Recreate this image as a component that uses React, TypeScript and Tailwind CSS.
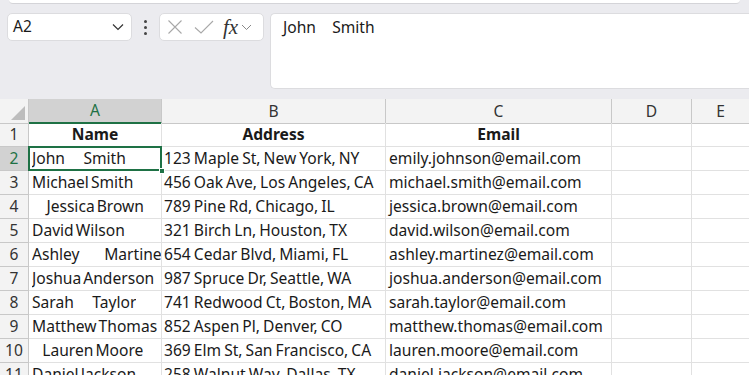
import React from "react";

const font = { fontFamily: '"Noto Sans", "Open Sans", sans-serif' };

const rows: [string, string, string][] = [
  ["John         Smith", "123 Maple St, New York, NY", "emily.johnson@email.com"],
  ["Michael Smith", "456 Oak Ave, Los Angeles, CA", "michael.smith@email.com"],
  ["       Jessica Brown", "789 Pine Rd, Chicago, IL", "jessica.brown@email.com"],
  ["David Wilson", "321 Birch Ln, Houston, TX", "david.wilson@email.com"],
  ["Ashley            Martinez", "654 Cedar Blvd, Miami, FL", "ashley.martinez@email.com"],
  ["Joshua Anderson", "987 Spruce Dr, Seattle, WA", "joshua.anderson@email.com"],
  ["Sarah         Taylor", "741 Redwood Ct, Boston, MA", "sarah.taylor@email.com"],
  ["Matthew Thomas", "852 Aspen Pl, Denver, CO", "matthew.thomas@email.com"],
  ["     Lauren Moore", "369 Elm St, San Francisco, CA", "lauren.moore@email.com"],
  ["Daniel Jackson", "258 Walnut Way, Dallas, TX", "daniel.jackson@email.com"],
];

const cols = "grid-cols-[29px_133px_224px_226px_80px_1fr]";

export default function App() {
  return (
    <div className="w-[749px] h-[375px] overflow-hidden bg-[#ebebef] text-[#1a1a1a]" style={font}>
      <div className="mx-[9px] h-[4px] bg-white border-b border-[#d4d4d8] rounded-b-[4px]" />
      <div className="flex items-start h-[93px] pt-[9px]">
        <div className="ml-[7px] w-[125px] h-[28px] bg-white border border-[#dcdcdf] rounded-[5px] flex items-center pl-[5px] pr-[7px]">
          <span className="text-[15.5px] flex-1">A2</span>
          <svg width="12" height="8" viewBox="0 0 12 8"><path d="M1 1.5 L6 6.5 L11 1.5" fill="none" stroke="#333" strokeWidth="1.2" /></svg>
        </div>
        <div className="w-[27px] h-[28px] flex flex-col items-center justify-center gap-[3px]">
          <div className="w-[3px] h-[3px] bg-[#444] rounded-full" />
          <div className="w-[3px] h-[3px] bg-[#444] rounded-full" />
          <div className="w-[3px] h-[3px] bg-[#444] rounded-full" />
        </div>
        <div className="w-[105px] h-[28px] bg-white border border-[#dcdcdf] rounded-[5px] flex items-center pl-[7px]">
          <svg width="16" height="16" viewBox="0 0 16 16"><path d="M1.5 1.5 L14.5 14.5 M14.5 1.5 L1.5 14.5" stroke="#a8a8a8" strokeWidth="1.1" fill="none" /></svg>
          <svg className="ml-[11px]" width="20" height="16" viewBox="0 0 20 16"><path d="M1 8.5 L7 14 L19 2" stroke="#a8a8a8" strokeWidth="1.1" fill="none" /></svg>
          <span className="ml-[9px] text-[21px] leading-none italic text-[#333]" style={{ fontFamily: '"Liberation Serif", serif' }}>fx</span>
          <svg className="ml-[3px]" width="11" height="7" viewBox="0 0 11 7"><path d="M1 1 L5.5 5.5 L10 1" fill="none" stroke="#888" strokeWidth="1" /></svg>
        </div>
        <div className="ml-[6px] flex-1 h-[76px] bg-white border border-[#dcdcdf] rounded-l-[5px] border-r-0 pl-[12px] pt-[1px]">
          <span className="text-[15.6px] whitespace-pre">John    Smith</span>
        </div>
      </div>
      <div className="mt-[2px] text-[15.6px] [word-spacing:-1px]">
        <div className={`grid ${cols} h-[24px] bg-[#f3f3f3] text-[#333]`}>
          <div className="relative border-r border-b border-[#c8c8c8]">
            <svg className="absolute right-[3px] bottom-[3px]" width="14" height="14" viewBox="0 0 14 14"><path d="M14 0 L14 14 L0 14 Z" fill="#bdbdbd" /></svg>
          </div>
          <div className="bg-[#d2d2d2] border-r border-[#c8c8c8] border-b-2 border-b-[#1e7145] flex items-center justify-center text-[#1e7145]">A</div>
          <div className="border-r border-b border-[#c8c8c8] flex items-center justify-center">B</div>
          <div className="border-r border-b border-[#c8c8c8] flex items-center justify-center">C</div>
          <div className="border-r border-b border-[#c8c8c8] flex items-center justify-center">D</div>
          <div className="border-b border-[#c8c8c8] flex items-center justify-center">E</div>
        </div>
        <div className={`grid ${cols} h-[24px] bg-white`}>
          <div className="bg-[#f3f3f3] border-r border-b border-[#c8c8c8] flex items-center justify-center text-[#333]">1</div>
          <div className="border-r border-b border-[#e1e1e1] flex items-center justify-center font-bold">Name</div>
          <div className="border-r border-b border-[#e1e1e1] flex items-center justify-center font-bold">Address</div>
          <div className="border-r border-b border-[#e1e1e1] flex items-center justify-center font-bold">Email</div>
          <div className="border-r border-b border-[#e1e1e1]" />
          <div className="border-b border-[#e1e1e1]" />
        </div>
        {rows.map((r, i) => {
          const sel = i === 0;
          return (
            <div key={i} className={`grid ${cols} h-[24px] bg-white`}>
              <div className={`${sel ? "bg-[#d2d2d2] text-[#1e7145]" : "bg-[#f3f3f3] text-[#333]"} border-r border-b border-[#c8c8c8] flex items-center justify-center`}>{i + 2}</div>
              <div className="relative border-r border-b border-[#e1e1e1] flex items-center pl-[3px] whitespace-pre [word-spacing:-2px]">
                <div className="overflow-hidden">{r[0]}</div>
                {sel && (
                  <>
                    <div className="absolute inset-[-1px] border-2 border-[#1e7145]" />
                    <div className="absolute right-[-4px] bottom-[-4px] w-[6px] h-[6px] bg-[#1e7145] border border-white z-10" />
                  </>
                )}
              </div>
              <div className="border-r border-b border-[#e1e1e1] flex items-center pl-[2px] whitespace-pre overflow-hidden">{r[1]}</div>
              <div className="border-r border-b border-[#e1e1e1] flex items-center pl-[3px] whitespace-pre overflow-hidden">{r[2]}</div>
              <div className="border-r border-b border-[#e1e1e1]" />
              <div className="border-b border-[#e1e1e1]" />
            </div>
          );
        })}
      </div>
    </div>
  );
}
